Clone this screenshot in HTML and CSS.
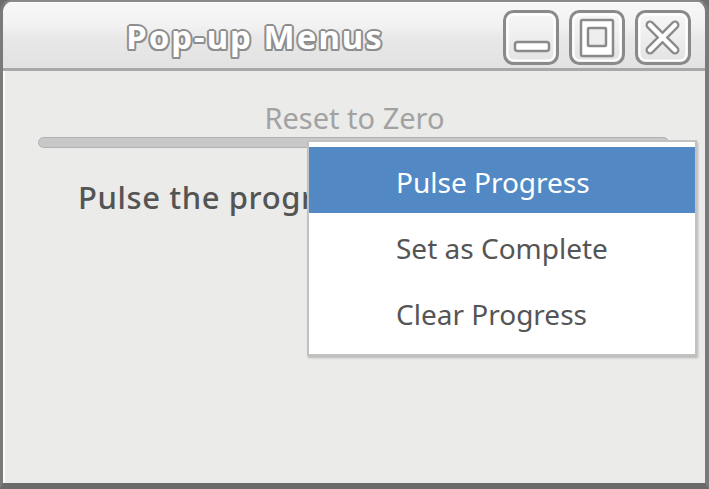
FILE: index.html
```html
<!DOCTYPE html>
<html>
<head>
<meta charset="utf-8">
<link rel="stylesheet" href="styles.css">
</head>
<body>
<div class="window">
  <div class="titlebar">
    <div class="title">Pop-up Menus</div>
    <div class="buttons">
      <svg class="wbtn" width="56" height="55" viewBox="0 0 56 55">
        <defs>
          <linearGradient id="bg" x1="0" y1="0" x2="0" y2="1">
            <stop offset="0" stop-color="#f7f7f7"/>
            <stop offset="0.5" stop-color="#eeeeee"/>
            <stop offset="1" stop-color="#e2e2e2"/>
          </linearGradient>
        </defs>
        <rect x="1.5" y="1.5" width="53" height="52" rx="9" fill="url(#bg)" stroke="#8a8a8a" stroke-width="3"/>
        <rect x="4.5" y="4.5" width="47" height="46" rx="6.5" fill="none" stroke="#ffffff" stroke-width="2"/>
        <rect x="12" y="32" width="34" height="9" rx="2.5" fill="#ffffff" stroke="#8a8a8a" stroke-width="2.5"/>
      </svg>
      <svg class="wbtn" width="56" height="55" viewBox="0 0 56 55">
        <rect x="1.5" y="1.5" width="53" height="52" rx="9" fill="url(#bg)" stroke="#8a8a8a" stroke-width="3"/>
        <rect x="4.5" y="4.5" width="47" height="46" rx="6.5" fill="none" stroke="#ffffff" stroke-width="2"/>
        <rect x="12" y="10" width="32" height="36" rx="1.5" fill="#ffffff" stroke="#8a8a8a" stroke-width="2.5"/>
        <rect x="19" y="18" width="18" height="18" rx="1" fill="#eeeeee" stroke="#8a8a8a" stroke-width="2.5"/>
      </svg>
      <svg class="wbtn" width="56" height="55" viewBox="0 0 56 55">
        <rect x="1.5" y="1.5" width="53" height="52" rx="9" fill="url(#bg)" stroke="#8a8a8a" stroke-width="3"/>
        <rect x="4.5" y="4.5" width="47" height="46" rx="6.5" fill="none" stroke="#ffffff" stroke-width="2"/>
        <path d="M15 15 L40 40 M40 15 L15 40" stroke="#8a8a8a" stroke-width="9" stroke-linecap="round" fill="none"/>
        <path d="M15 15 L40 40 M40 15 L15 40" stroke="#ffffff" stroke-width="4.5" stroke-linecap="round" fill="none"/>
      </svg>
    </div>
  </div>
  <div class="content">
    <div class="reset">Reset to Zero</div>
    <div class="trough"></div>
    <div class="label">Pulse the progress bar</div>
    <div class="menu">
      <div class="item active">Pulse Progress</div>
      <div class="item">Set as Complete</div>
      <div class="item">Clear Progress</div>
    </div>
  </div>
</div>
</body>
</html>
```

FILE: styles.css
```css
html, body {
  margin: 0;
  padding: 0;
  width: 709px;
  height: 489px;
  overflow: hidden;
  background: #6e6e6e;
}

.window {
  box-sizing: border-box;
  width: 709px;
  height: 489px;
  display: flex;
  flex-direction: column;
  border-left: 3px solid #7a7a7a;
  border-right: 4px solid #7a7a7a;
  border-bottom: 6px solid #6a6a6a;
  border-top: 2px solid #8a8a8a;
  border-radius: 12px 12px 0 0;
  background: #ebebea;
  font-family: "Noto Sans", "DejaVu Sans", sans-serif;
  overflow: hidden;
}

.titlebar {
  height: 66px;
  flex: none;
  display: flex;
  align-items: flex-start;
  background: linear-gradient(#f7f7f7 0%, #f2f2f2 35%, #e8e8e8 55%, #e2e2e2 100%);
  border-bottom: 3px solid #a8a8a8;
  box-shadow: inset 0 1px 0 #ffffff;
}

.title {
  flex: 1;
  text-align: center;
  font-size: 33px;
  font-weight: 700;
  letter-spacing: 2px;
  color: #ffffff;
  line-height: 40px;
  margin-top: 15px;
  padding-left: 4px;
  text-shadow:
    2px 0 0 #8e8e8e, -2px 0 0 #8e8e8e, 0 2px 0 #8e8e8e, 0 -2px 0 #8e8e8e,
    1.5px 1.5px 0 #8e8e8e, -1.5px 1.5px 0 #8e8e8e, 1.5px -1.5px 0 #8e8e8e, -1.5px -1.5px 0 #8e8e8e;
}

.buttons {
  display: flex;
  gap: 10px;
  margin-top: 8px;
  margin-right: 14px;
}

.wbtn {
  display: block;
}

.content {
  flex: 1;
  position: relative;
  border-left: 2px solid #fbfbfb;
  padding: 31px 36px 0 33px;
}

.reset {
  text-align: center;
  font-size: 29px;
  line-height: 32px;
  color: #a2a2a2;
  padding-left: 2px;
}

.trough {
  margin-top: 3px;
  height: 9px;
  border: 1px solid #b2b2b2;
  border-radius: 6px;
  background: #c8c8c8;
}

.label {
  margin-top: 31px;
  padding-left: 40px;
  font-size: 31px;
  font-weight: 500;
  letter-spacing: 0.6px;
  line-height: 36px;
  color: #545454;
  white-space: nowrap;
}

.menu {
  position: absolute;
  left: 302px;
  top: 69px;
  width: 386px;
  background: #ffffff;
  border: 2px solid #c2c2c2;
  padding: 5px 0 9px;
  box-shadow: 1px 2px 2px rgba(0, 0, 0, 0.22);
}

.item {
  height: 66px;
  line-height: 70px;
  padding-left: 87px;
  font-size: 28px;
  color: #555555;
  overflow: hidden;
}

.item.active {
  background: #5289c4;
  color: #ffffff;
}
```
